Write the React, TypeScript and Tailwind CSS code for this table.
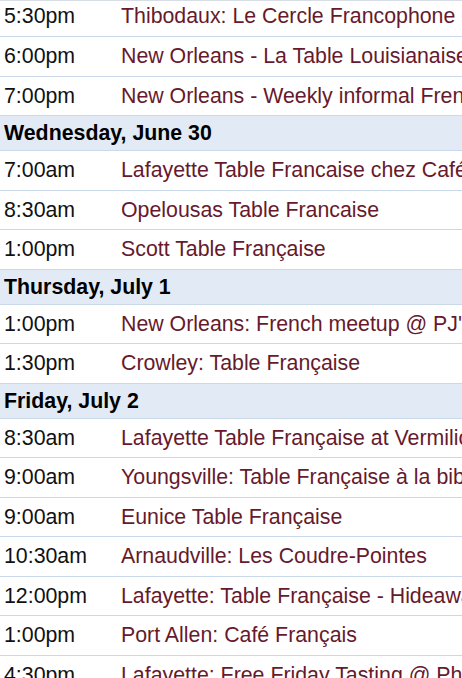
import React from 'react';

type Item = { day?: string; time?: string; title?: string };

const items: Item[] = [
    { time: '5:30pm', title: 'Thibodaux: Le Cercle Francophone' },
    { time: '6:00pm', title: 'New Orleans - La Table Louisianaise' },
    { time: '7:00pm', title: 'New Orleans - Weekly informal French conversation' },
    { day: 'Wednesday, June 30' },
    { time: '7:00am', title: 'Lafayette Table Francaise chez Café Mosaic' },
    { time: '8:30am', title: 'Opelousas Table Francaise' },
    { time: '1:00pm', title: 'Scott Table Française' },
    { day: 'Thursday, July 1' },
    { time: '1:00pm', title: "New Orleans: French meetup @ PJ's Coffee" },
    { time: '1:30pm', title: 'Crowley: Table Française' },
    { day: 'Friday, July 2' },
    { time: '8:30am', title: 'Lafayette Table Française at Vermilionville' },
    { time: '9:00am', title: 'Youngsville: Table Française à la bibliothèque' },
    { time: '9:00am', title: 'Eunice Table Française' },
    { time: '10:30am', title: 'Arnaudville: Les Coudre-Pointes' },
    { time: '12:00pm', title: 'Lafayette: Table Française - Hideaway on Lee' },
    { time: '1:00pm', title: 'Port Allen: Café Français' },
    { time: '4:30pm', title: 'Lafayette: Free Friday Tasting @ Pharmacie' },
];

export default function App() {
    return (
        <div className="w-[462px] h-[678px] overflow-hidden bg-white font-['Liberation_Sans',Arial,sans-serif] text-[21.33px] leading-[24px]">
            <div className="border-t border-[#d6dde5]">
                {items.map((it, i) =>
                    it.day ? (
                        <div
                            key={i}
                            className="h-[35px] flex items-center px-1 bg-[#e2eaf6] border-b border-[#c9d9ea] font-bold text-black whitespace-nowrap"
                        >
                            {it.day}
                        </div>
                    ) : (
                        <div
                            key={i}
                            className={
                                'flex whitespace-nowrap border-b border-[#c9d9ea] ' +
                                (i === 0 ? 'h-[36px] pb-[5px] items-center' : 'h-[39.5px] items-center')
                            }
                        >
                            <div className="w-[117px] shrink-0 pl-1 text-[#111]">{it.time}</div>
                            <div className="pl-1 text-[#661a2c]">{it.title}</div>
                        </div>
                    )
                )}
            </div>
        </div>
    );
}
